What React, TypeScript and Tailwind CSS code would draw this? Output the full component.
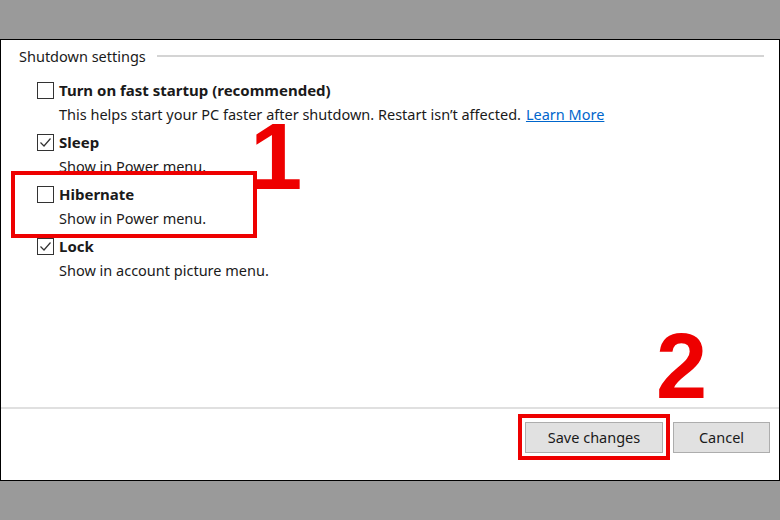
import React from "react";

const items = [
  { label: "Turn on fast startup (recommended)", desc: "This helps start your PC faster after shutdown. Restart isn\u2019t affected.", checked: false, link: true },
  { label: "Sleep", desc: "Show in Power menu.", checked: true },
  { label: "Hibernate", desc: "Show in Power menu.", checked: false },
  { label: "Lock", desc: "Show in account picture menu.", checked: true },
];

function Box({ checked }: { checked: boolean }) {
  return (
    <span className="w-[17px] h-[17px] border border-[#333] bg-white flex items-center justify-center shrink-0">
      {checked && (
        <svg width="13" height="13" viewBox="0 0 13 13">
          <path d="M1.5 6.5 L5 10 L11.5 2.5" fill="none" stroke="#333" strokeWidth="1.2" />
        </svg>
      )}
    </span>
  );
}

export default function App() {
  return (
    <div
      className="w-[780px] h-[520px] bg-[#9a9a9a] flex flex-col relative overflow-hidden"
      style={{ fontFamily: '"Noto Sans", "Open Sans", sans-serif' }}
    >
      <div className="h-[39px] shrink-0" />
      <div className="h-[442px] bg-white border border-black flex flex-col text-[#1a1a1a]">
        <div className="flex-1">
          <div className="flex items-center mt-[6px] pl-[18px] h-[20px] pr-[15px]">
            <span className="text-[14.5px] leading-[20px]">Shutdown settings</span>
            <div className="flex-1 h-[2px] bg-[#d4d4d4] ml-[11px]" />
          </div>
          <div className="flex flex-col gap-[4px] mt-[12px] pl-[36px]">
            {items.map((it) => (
              <div key={it.label} className="flex flex-col">
                <div className="flex items-center gap-[5px] h-[24px]">
                  <Box checked={it.checked} />
                  <span className="text-[15px] font-bold">{it.label}</span>
                </div>
                <div className="pl-[22px] h-[24px] flex items-center text-[14.5px] leading-[20px]">
                  {it.desc}
                  {it.link && <span className="ml-[5px] text-[#0066cc] underline">Learn More</span>}
                </div>
              </div>
            ))}
          </div>
        </div>
        <div className="h-[2px] bg-[#e0e0e0]" />
        <div className="h-[71px] flex justify-end gap-[10px] pt-[13px] pr-[9px]">
          <button className="w-[138px] h-[31px] bg-[#e1e1e1] border border-[#adadad] text-[14.5px] text-[#1a1a1a]">Save changes</button>
          <button className="w-[97px] h-[31px] bg-[#e1e1e1] border border-[#adadad] text-[14.5px] text-[#1a1a1a]">Cancel</button>
        </div>
      </div>

      {/* annotations */}
      <div className="absolute left-[11px] top-[171px] w-[246px] h-[67px] border-[4px] border-[#ee0000]" />
      <div className="absolute left-[518px] top-[414px] w-[152px] h-[46px] border-[4px] border-[#ee0000]" />
      <span
        className="absolute left-[250px] top-[124px] text-[#ee0000] text-[94px] font-bold leading-[66px]"
        style={{ fontFamily: '"Liberation Sans", Arial, sans-serif' }}
      >
        1
      </span>
      <span
        className="absolute left-[656px] top-[333px] text-[#ee0000] text-[92px] font-bold leading-[66px]"
        style={{ fontFamily: '"Liberation Sans", Arial, sans-serif' }}
      >
        2
      </span>
    </div>
  );
}
